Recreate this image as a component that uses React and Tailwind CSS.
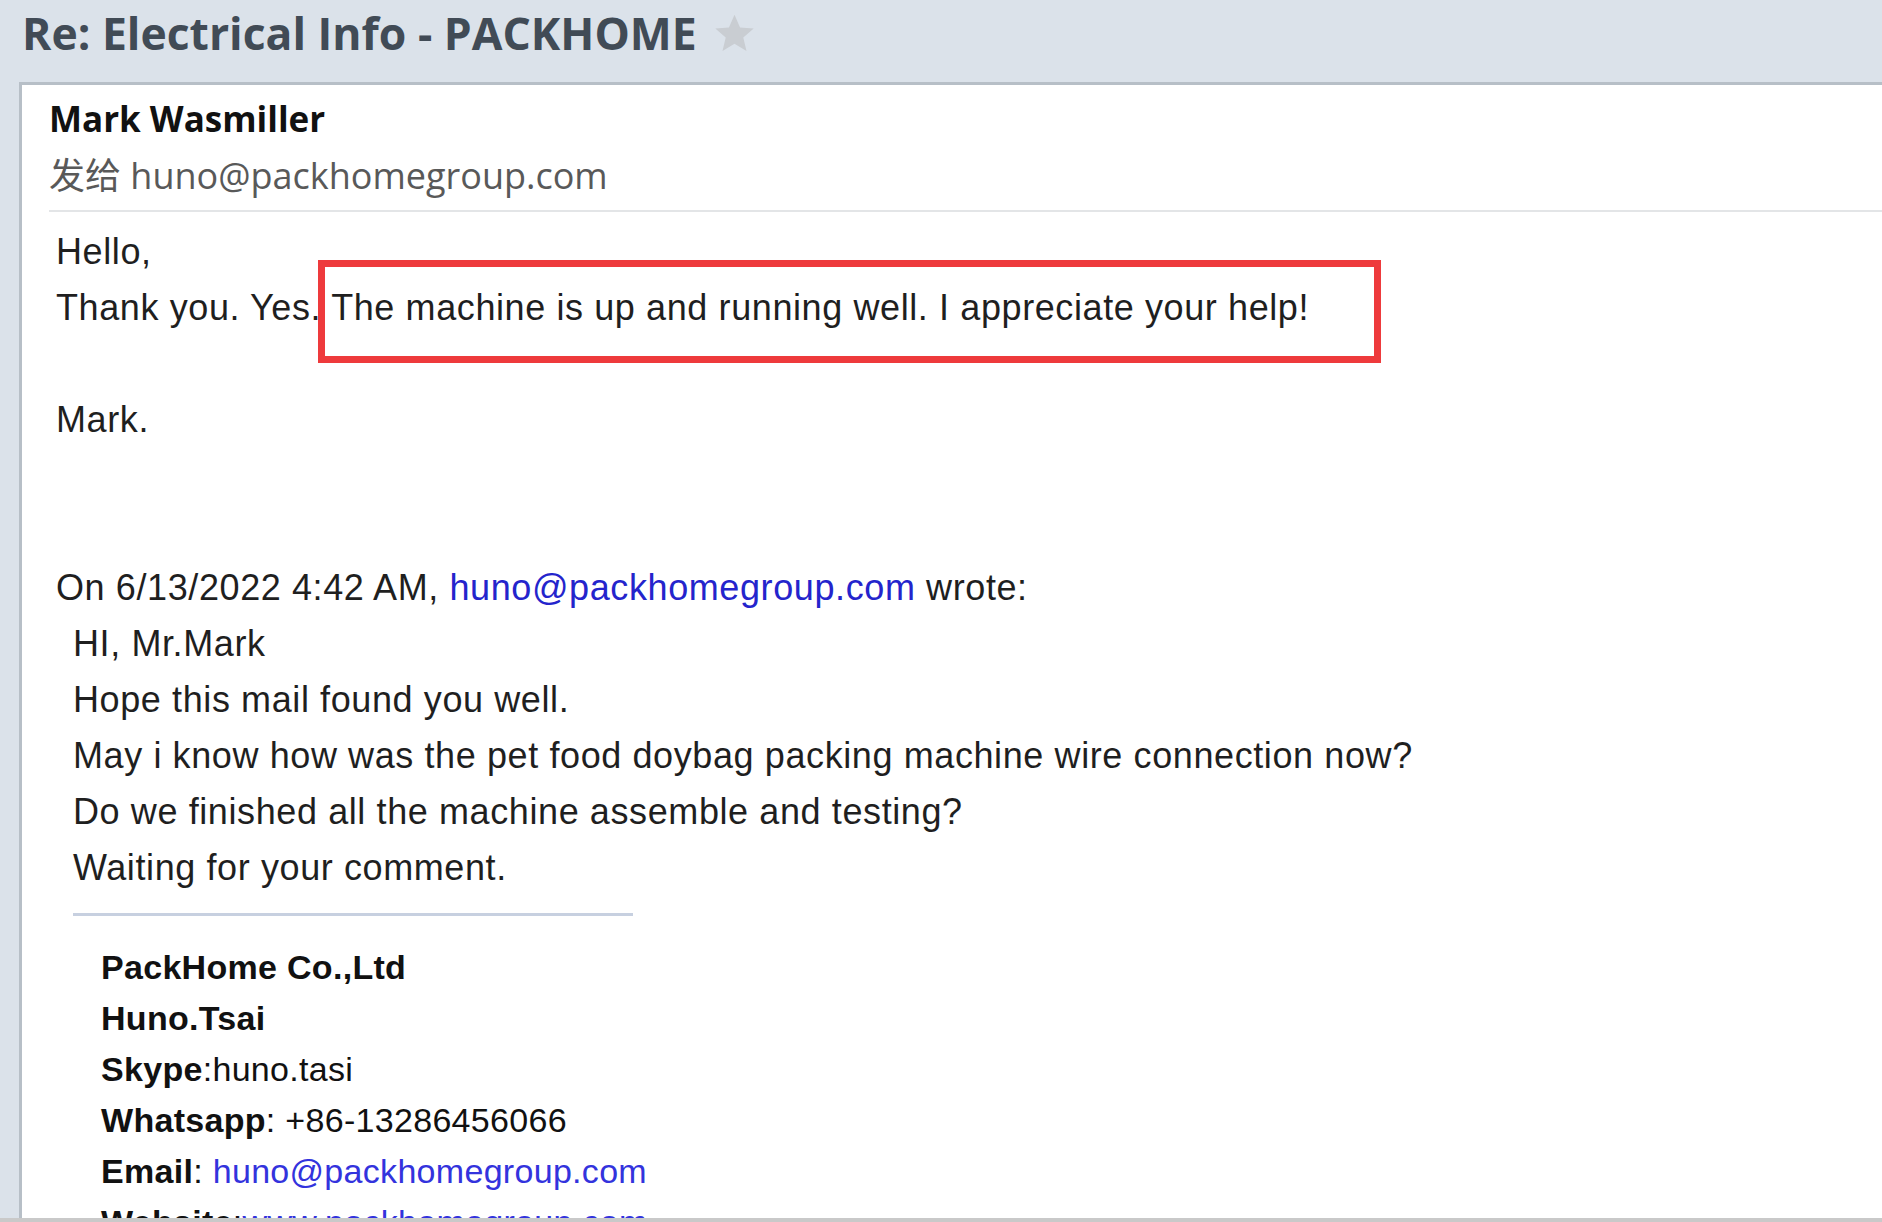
import React from "react";

const headFont = { fontFamily: '"Open Sans", "Noto Sans CJK SC", sans-serif' };

const Star = () => (
  <svg viewBox="0 0 24 24" className="mt-[9px] ml-[15px] h-[43px] w-[45px]">
    <path
      d="M12 1.5l3.1 7.1 7.6.6-5.8 5 1.8 7.5L12 17.7l-6.7 4 1.8-7.5-5.8-5 7.6-.6z"
      fill="#c9cdd2"
    />
  </svg>
);

const quoteLines = [
  "HI, Mr.Mark",
  "Hope this mail found you well.",
  "May i know how was the pet food doybag packing machine wire connection now?",
  "Do we finished all the machine assemble and testing?",
  "Waiting for your comment.",
];

export default function App() {
  return (
    <div className="relative flex h-[1222px] w-full flex-col overflow-hidden border-b-[4px] border-[#c9c9c9] bg-[#dbe2ea]">
      {/* subject bar */}
      <div className="flex h-[82px] shrink-0 items-start pl-[22px] pt-[3px]">
        <h1
          className="text-[44.5px] font-bold leading-[60px] text-[#414b56]"
          style={headFont}
        >
          Re: Electrical Info - PACKHOME
        </h1>
        <Star />
      </div>

      {/* message panel */}
      <div className="ml-[19px] flex-1 overflow-hidden border-l-[3px] border-t-[3px] border-[#b7bfc7] bg-white">
        <div className="pl-[27px] pt-[10px]" style={headFont}>
          <div className="text-[35px] font-bold leading-[48px] text-[#111]">Mark Wasmiller</div>
          <div className="mt-[9px] text-[36px] leading-[48px] text-[#595959]">
            发给 huno@packhomegroup.com
          </div>
          <div className="mt-[10px] h-[2px] bg-[#e3e5e7]" />
        </div>

        <div
          className="pl-[34px] pt-[12px] text-[36px] leading-[56px] tracking-[0.6px] text-[#1f1f1f]"
          style={{ fontFamily: '"Liberation Sans", Arial, sans-serif' }}
        >
          <div>Hello,</div>
          <div>Thank you. Yes. The machine is up and running well. I appreciate your help!</div>
          <div className="h-[56px]" />
          <div>Mark.</div>
          <div className="h-[112px]" />
          <div>
            On 6/13/2022 4:42 AM, <span className="text-[#2424cc]">huno@packhomegroup.com</span> wrote:
          </div>

          <div className="pl-[17px]">
            {quoteLines.map((l) => (
              <div key={l}>{l}</div>
            ))}

            <div className="mt-[17px] h-[3px] w-[560px] bg-[#c7d0e0]" />

            <div className="ml-[28px] mt-[26px] text-[34px] leading-[51px] tracking-[0.3px] text-[#111]">
              <div className="font-bold">PackHome Co.,Ltd</div>
              <div className="font-bold">Huno.Tsai</div>
              <div>
                <span className="font-bold">Skype</span>:huno.tasi
              </div>
              <div>
                <span className="font-bold">Whatsapp</span>: +86-13286456066
              </div>
              <div>
                <span className="font-bold">Email</span>:{" "}
                <span className="text-[#3333dd]">huno@packhomegroup.com</span>
              </div>
              <div>
                <span className="font-bold">Website</span>:
                <span className="text-[#3333dd] underline">www.packhomegroup.com</span>
              </div>
            </div>
          </div>
        </div>
      </div>

      {/* highlight annotation */}
      <div className="pointer-events-none absolute left-[318px] top-[260px] h-[103px] w-[1063px] border-[7px] border-[#ee3a3c]" />
    </div>
  );
}
